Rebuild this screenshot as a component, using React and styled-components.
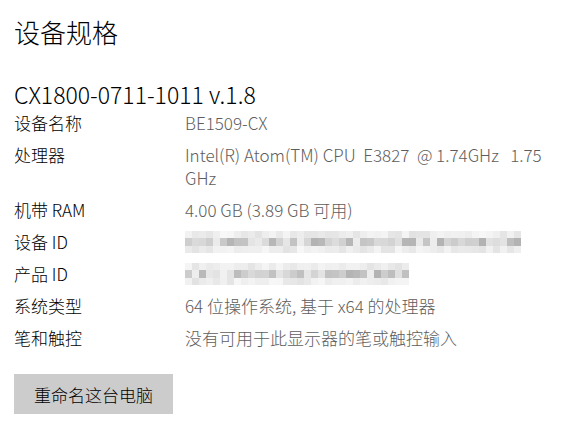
import React from 'react'
import styled, { createGlobalStyle } from 'styled-components'

const GlobalStyle = createGlobalStyle`
  html, body {
    margin: 0;
    padding: 0;
    background: #ffffff;
  }
  body {
    font-family: 'Noto Sans CJK SC', sans-serif;
    color: #000000;
  }
`

const specs = [
  { label: '设备名称', value: 'BE1509-CX' },
  { label: '处理器', value: 'Intel(R) Atom(TM) CPU  E3827  @ 1.74GHz   1.75 GHz' },
  { label: '机带 RAM', value: '4.00 GB (3.89 GB 可用)' },
  { label: '设备 ID', mosaic: 48, seed: 1 },
  { label: '产品 ID', mosaic: 32, seed: 7 },
  { label: '系统类型', value: '64 位操作系统, 基于 x64 的处理器' },
  { label: '笔和触控', value: '没有可用于此显示器的笔或触控输入' },
]

// cheap deterministic noise for the blurred ids
function shade(i, row, seed) {
  const n = Math.abs(Math.sin((i + seed * 31) * 12.9898 + row * 78.233) * 43758.5453) % 1
  if (row === 1) return Math.round(178 + n * 64)
  return Math.round(226 + n * 22)
}

function Mosaic({ cells, seed }) {
  const rows = [0, 1, 2]
  return (
    <MosaicBox>
      {rows.map((r) => (
        <MosaicRow key={r} $tall={r === 1}>
          {Array.from({ length: cells }).map((_, i) => {
            const g = shade(i, r, seed)
            return <Cell key={i} style={{ background: `rgb(${g},${g},${g})` }} />
          })}
        </MosaicRow>
      ))}
    </MosaicBox>
  )
}

function App() {
  return (
    <Page>
      <GlobalStyle />
      <Heading>设备规格</Heading>
      <Model>CX1800-0711-1011 v.1.8</Model>
      <SpecList>
        {specs.map((s) => (
          <React.Fragment key={s.label}>
            <Label>{s.label}</Label>
            {s.mosaic ? <Mosaic cells={s.mosaic} seed={s.seed} /> : <Value>{s.value}</Value>}
          </React.Fragment>
        ))}
      </SpecList>
      <RenameButton>重命名这台电脑</RenameButton>
    </Page>
  )
}

const Page = styled.div`
  width: 569px;
  height: 446px;
  box-sizing: border-box;
  padding: 14px 0 0 14px;
  display: flex;
  flex-direction: column;
  align-items: flex-start;
`

const Heading = styled.h1`
  margin: 0;
  font-size: 26px;
  line-height: 36px;
  font-weight: 300;
`

const Model = styled.div`
  margin: 32px 0 5px;
  font-size: 23px;
  line-height: 24px;
  font-weight: 300;
`

const SpecList = styled.div`
  display: grid;
  grid-template-columns: 171px 372px;
  row-gap: 9px;
  font-size: 17px;
  line-height: 23px;
  font-weight: 300;
`

const Label = styled.div`
  color: #000000;
`

const Value = styled.div`
  color: #5d5d5d;
  white-space: pre-wrap;
`

const MosaicBox = styled.div`
  height: 23px;
  display: flex;
  flex-direction: column;
  justify-content: center;
  filter: blur(0.6px);
`

const MosaicRow = styled.div`
  display: flex;
  height: ${(p) => (p.$tall ? '8px' : '7px')};
`

const Cell = styled.div`
  width: 7px;
  height: 100%;
  flex: none;
`

const RenameButton = styled.button`
  margin-top: 25px;
  width: 159px;
  height: 40px;
  border: none;
  background: #cccccc;
  color: #000000;
  font-family: 'Noto Sans CJK SC', sans-serif;
  font-size: 17px;
  font-weight: 300;
  padding: 0;
  cursor: pointer;
`

export default App
